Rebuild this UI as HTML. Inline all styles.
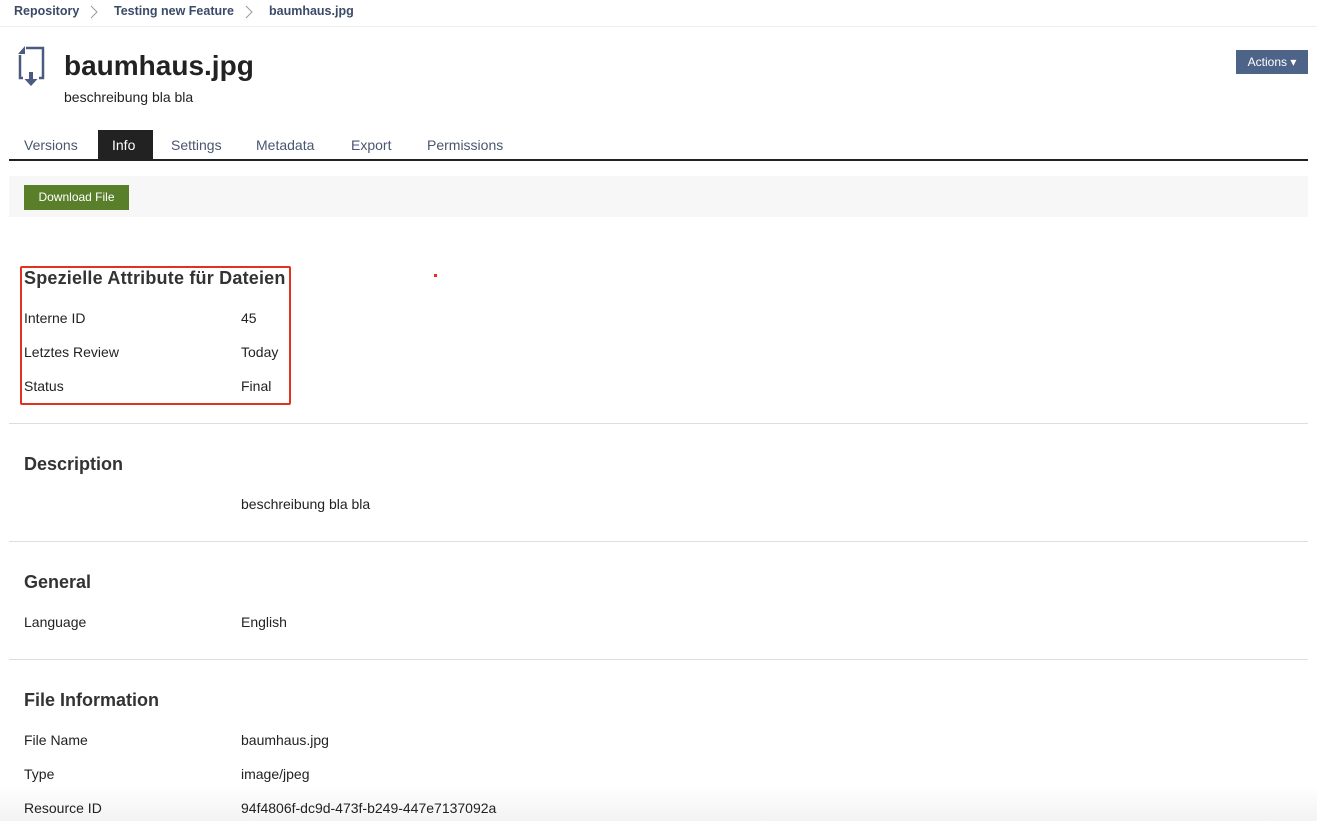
<!DOCTYPE html>
<html><head><meta charset="utf-8"><style>
body{margin:0;width:1317px;height:821px;background:#fff;font-family:"Liberation Sans",sans-serif;color:#222;position:relative;overflow:hidden}
.a{position:absolute;white-space:nowrap}
.bc{font-size:12.5px;font-weight:bold;color:#3b4a67;top:4px}
.tab{font-size:14px;color:#4a5670;top:137px}
.h{font-size:18px;font-weight:bold;color:#333}
.r{font-size:14px;color:#222}
.sep{position:absolute;left:9px;width:1299px;height:1px;background:#ddd}
</style></head><body>
<div class="a bc" style="left:14px">Repository</div>
<svg class="a" style="left:90px;top:5px" width="8" height="14"><path d="M1 1 L7 7 L1 13" fill="none" stroke="#999" stroke-width="1"/></svg>
<div class="a bc" style="left:114px">Testing new Feature</div>
<svg class="a" style="left:245px;top:5px" width="8" height="14"><path d="M1 1 L7 7 L1 13" fill="none" stroke="#999" stroke-width="1"/></svg>
<div class="a bc" style="left:269px">baumhaus.jpg</div>
<div style="position:absolute;left:0;top:26px;width:1317px;height:1px;background:#eee"></div>
<svg class="a" style="left:17px;top:45px" width="28" height="44" viewBox="0 0 28 44"><path d="M9 3 H26 V33 H22 M6 33 H3 V10" fill="none" stroke="#4a5a80" stroke-width="2.5"/><path d="M8 1 L1 9 H8 Z" fill="#4a5a80"/><rect x="12" y="27" width="4" height="7" fill="#4a5a80"/><path d="M7.5 34 H20.5 L14 41 Z" fill="#4a5a80"/></svg>
<div class="a" style="left:64px;top:50px;font-size:28px;font-weight:bold;color:#222">baumhaus.jpg</div>
<div class="a" style="left:64px;top:89px;font-size:14px">beschreibung bla bla</div>
<div class="a" style="left:1236px;top:50px;width:72px;height:24px;background:#4d6388;color:#fff;font-size:12px;line-height:24px;text-align:center">Actions &#9662;</div>
<div class="a tab" style="left:24px">Versions</div>
<div class="a" style="left:98px;top:130px;width:55px;height:29px;background:#222"></div>
<div class="a tab" style="left:112px;color:#fff">Info</div>
<div class="a tab" style="left:171px">Settings</div>
<div class="a tab" style="left:256px">Metadata</div>
<div class="a tab" style="left:351px">Export</div>
<div class="a tab" style="left:427px">Permissions</div>
<div class="a" style="left:9px;top:159px;width:1299px;height:2px;background:#222"></div>
<div class="a" style="left:9px;top:176px;width:1299px;height:41px;background:#f7f7f7"></div>
<div class="a" style="left:24px;top:185px;width:105px;height:25px;background:#5a7f2b;color:#fff;font-size:12px;line-height:25px;text-align:center">Download File</div>
<div class="a" style="left:20px;top:266px;width:267px;height:135px;border:2px solid #e0321f;border-radius:2px"></div>
<div class="a" style="left:434px;top:274px;width:3px;height:3px;background:#e0321f"></div>
<div class="a h" style="left:24px;top:268px;letter-spacing:0.2px">Spezielle Attribute für Dateien</div>
<div class="a r" style="left:24px;top:310px">Interne ID</div><div class="a r" style="left:241px;top:310px">45</div>
<div class="a r" style="left:24px;top:344px">Letztes Review</div><div class="a r" style="left:241px;top:344px">Today</div>
<div class="a r" style="left:24px;top:378px">Status</div><div class="a r" style="left:241px;top:378px">Final</div>
<div class="sep" style="top:423px"></div>
<div class="a h" style="left:24px;top:454px">Description</div>
<div class="a r" style="left:241px;top:496px">beschreibung bla bla</div>
<div class="sep" style="top:541px"></div>
<div class="a h" style="left:24px;top:572px">General</div>
<div class="a r" style="left:24px;top:614px">Language</div><div class="a r" style="left:241px;top:614px">English</div>
<div class="sep" style="top:659px"></div>
<div class="a h" style="left:24px;top:690px">File Information</div>
<div class="a r" style="left:24px;top:732px">File Name</div><div class="a r" style="left:241px;top:732px">baumhaus.jpg</div>
<div class="a r" style="left:24px;top:766px">Type</div><div class="a r" style="left:241px;top:766px">image/jpeg</div>
<div class="a" style="left:0;top:785px;width:1317px;height:36px;background:linear-gradient(#fff0,#f3f3f3)"></div>
<div class="a r" style="left:24px;top:800px">Resource ID</div><div class="a r" style="left:241px;top:800px">94f4806f-dc9d-473f-b249-447e7137092a</div>
</body></html>
